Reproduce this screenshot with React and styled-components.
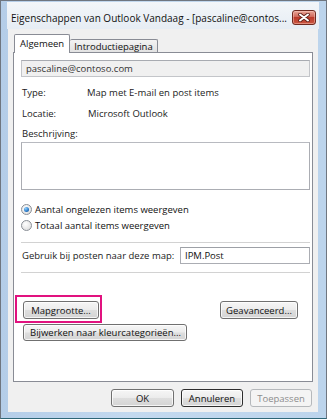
import React from 'react';
import styled, { createGlobalStyle } from 'styled-components';

const GlobalStyle = createGlobalStyle`
  html, body {
    margin: 0;
    padding: 0;
    background: #ffffff;
  }
  body {
    font-family: "Open Sans", "Segoe UI", sans-serif;
    font-size: 9.5px;
    color: #1b1b1b;
  }
  * {
    box-sizing: border-box;
  }
`;

const Window = styled.div`
  width: 327px;
  height: 419px;
  display: flex;
  flex-direction: column;
  border: 1px solid #6f7680;
  border-bottom-color: #2e6677;
  background: linear-gradient(to right, #b4cde8, #c3d9ef 40%, #bcd4ec);
  padding: 1px 8px 6px 7px;
`;

const TitleBar = styled.div`
  height: 27px;
  display: flex;
  justify-content: space-between;
  align-items: flex-start;
  padding: 0 3px 0 4px;
  margin: 0 -1px 0 -1px;
  background: linear-gradient(to bottom, #f3f6f9, #e6edf4);
`;

const Title = styled.div`
  font-size: 10px;
  line-height: 14px;
  margin-top: 9px;
  color: #111;
  white-space: nowrap;
`;

const CloseButton = styled.div`
  width: 24px;
  height: 15px;
  margin-top: 8px;
  border: 1px solid #6e2a21;
  border-radius: 3px;
  background: linear-gradient(to bottom, #e8a597 0%, #d0685a 45%, #bb3a2b 50%, #c95641 100%);
  box-shadow: inset 0 0 0 1px rgba(255, 210, 200, 0.45);
  display: flex;
  align-items: center;
  justify-content: center;
`;

const Client = styled.div`
  flex: 1;
  display: flex;
  flex-direction: column;
  background: #f0f0f0;
  padding: 4px 5px 0 5px;
`;

const TabStrip = styled.div`
  display: flex;
  align-items: flex-end;
  padding-left: 1px;
  height: 19px;
  position: relative;
  z-index: 1;
`;

const Tab = styled.div`
  height: ${p => (p.active ? '19px' : '13px')};
  padding: 0 ${p => (p.active ? '5px' : '4px')};
  border: 1px solid #898c95;
  border-bottom: none;
  border-left-width: ${p => (p.active ? '1px' : '0')};
  background: ${p => (p.active ? '#ffffff' : 'linear-gradient(to bottom, #f3f3f3, #e2e2e2)')};
  margin-bottom: ${p => (p.active ? '-1px' : '0')};
  font-size: 9.5px;
  font-weight: 500;
  line-height: ${p => (p.active ? '18px' : '13px')};
  color: #111;
  border-radius: 2px 2px 0 0;
  white-space: nowrap;
`;

const Panel = styled.div`
  height: 330px;
  border: 1px solid #898c95;
  background: #ffffff;
  padding: 0 2px 0 7px;
  display: flex;
  flex-direction: column;
`;

const ReadOnlyField = styled.div`
  margin-top: 7px;
  height: 17px;
  border: 1px solid #c3c5c9;
  border-top-color: #a8abb1;
  background: #f0f0f0;
  padding-left: 4px;
  line-height: 15px;
  color: #333;
`;

const InfoRow = styled.div`
  display: grid;
  grid-template-columns: 65px 1fr;
  margin-top: ${p => p.gap || '0'};
  line-height: 16px;
  padding-left: 1px;
`;

const InfoValue = styled.div`
  padding-left: ${p => p.indent || '0'};
`;

const Label = styled.div`
  margin-top: ${p => p.gap || '0'};
  line-height: 14px;
  padding-left: 1px;
`;

const TextArea = styled.div`
  margin-top: 1px;
  height: 48px;
  border: 1px solid #abadb3;
  border-top-color: #b8bac0;
  background: #fff;
`;

const RadioGroup = styled.div`
  margin-top: 11px;
  display: flex;
  flex-direction: column;
`;

const RadioRow = styled.div`
  display: flex;
  align-items: center;
  height: 16px;
  gap: 3px;
  font-weight: 500;
  color: #111;
`;

const RadioDot = styled.span`
  width: 11px;
  height: 11px;
  border-radius: 50%;
  border: 1px solid #8a8f96;
  background: radial-gradient(circle at 40% 35%, #ffffff, #e3e3e3 70%, #cfcfcf);
  display: flex;
  align-items: center;
  justify-content: center;

  &::after {
    content: '';
    display: ${p => (p.checked ? 'block' : 'none')};
    width: 5px;
    height: 5px;
    border-radius: 50%;
    background: radial-gradient(circle at 35% 30%, #8fd0ff, #2a7ac8 60%, #11457d);
  }
`;

const Separator = styled.div`
  margin-top: ${p => p.gap};
  height: 1px;
  background: #d2d2d2;
`;

const PostRow = styled.div`
  margin-top: 4px;
  display: flex;
  align-items: center;
  height: 17px;
  padding-left: 1px;
`;

const PostLabel = styled.div`
  width: 158px;
`;

const PostInput = styled.div`
  flex: 1;
  height: 17px;
  border: 1px solid #abadb3;
  border-top-color: #9da0a6;
  padding-left: 4px;
  line-height: 15px;
  font-weight: 500;
  color: #111;
`;

const ButtonRow = styled.div`
  display: flex;
  justify-content: space-between;
  align-items: center;
  margin-top: ${p => p.gap};
  padding: 0 12px 0 2px;
`;

const Button = styled.div`
  position: relative;
  width: ${p => p.width};
  height: ${p => p.height || '18px'};
  border: 1px solid ${p => (p.disabled ? '#b5b8bb' : p.focused ? '#2d2d2d' : '#707070')};
  border-radius: 3px;
  background: ${p =>
    p.disabled
      ? '#f4f4f4'
      : 'linear-gradient(to bottom, #f6f6f6 0%, #ececec 48%, #dedede 52%, #d4d4d4 100%)'};
  box-shadow: inset 0 0 0 1px ${p => (p.disabled ? '#f4f4f4' : 'rgba(255,255,255,0.75)')};
  display: flex;
  align-items: center;
  justify-content: ${p => (p.left ? 'flex-start' : 'center')};
  padding-left: ${p => (p.left ? '6px' : '0')};
  font-size: 9.5px;
  font-weight: 500;
  color: ${p => (p.disabled ? '#8d8d8d' : '#111')};
  white-space: nowrap;

  ${p =>
    p.highlight &&
    `
    &::after {
      content: '';
      position: absolute;
      top: -7px;
      left: -9px;
      right: -4px;
      bottom: -5px;
      border: 2px solid #e1127f;
    }
  `}
`;

const Footer = styled.div`
  display: flex;
  justify-content: flex-end;
  gap: 7px;
  padding: 7px 1px 0 0;
`;

const CloseGlyph = () => (
  <svg width="12" height="9" viewBox="0 0 12 9">
    <path d="M2 1.5 L10 7.5 M10 1.5 L2 7.5" stroke="#5a1d16" strokeWidth="3.6" strokeLinecap="round" />
    <path d="M2 1.5 L10 7.5 M10 1.5 L2 7.5" stroke="#ffffff" strokeWidth="2" strokeLinecap="round" />
  </svg>
);

export default function App() {
  return (
    <>
      <GlobalStyle />
      <Window>
        <TitleBar>
          <Title>Eigenschappen van Outlook Vandaag - [pascaline@contos...</Title>
          <CloseButton>
            <CloseGlyph />
          </CloseButton>
        </TitleBar>
        <Client>
          <TabStrip>
            <Tab active>Algemeen</Tab>
            <Tab>Introductiepagina</Tab>
          </TabStrip>
          <Panel>
            <ReadOnlyField>pascaline@contoso.com</ReadOnlyField>
            <InfoRow gap="8px">
              <div>Type:</div>
              <InfoValue>Map met E-mail en post items</InfoValue>
            </InfoRow>
            <InfoRow gap="5px">
              <div>Locatie:</div>
              <InfoValue indent="1px">Microsoft Outlook</InfoValue>
            </InfoRow>
            <Label gap="5px">Beschrijving:</Label>
            <TextArea />
            <RadioGroup>
              <RadioRow>
                <RadioDot checked />
                Aantal ongelezen items weergeven
              </RadioRow>
              <RadioRow>
                <RadioDot />
                Totaal aantal items weergeven
              </RadioRow>
            </RadioGroup>
            <Separator gap="9px" />
            <PostRow>
              <PostLabel>Gebruik bij posten naar deze map:</PostLabel>
              <PostInput>IPM.Post</PostInput>
            </PostRow>
            <Separator gap="8px" />
            <ButtonRow gap="28px">
              <Button width="76px" highlight>Mapgrootte...</Button>
              <Button width="78px">Geavanceerd...</Button>
            </ButtonRow>
            <ButtonRow gap="5px">
              <Button width="164px" height="17px" left>Bijwerken naar kleurcategorieën...</Button>
            </ButtonRow>
          </Panel>
          <Footer>
            <Button width="63px">OK</Button>
            <Button width="62px" focused>Annuleren</Button>
            <Button width="62px" disabled>Toepassen</Button>
          </Footer>
        </Client>
      </Window>
    </>
  );
}
